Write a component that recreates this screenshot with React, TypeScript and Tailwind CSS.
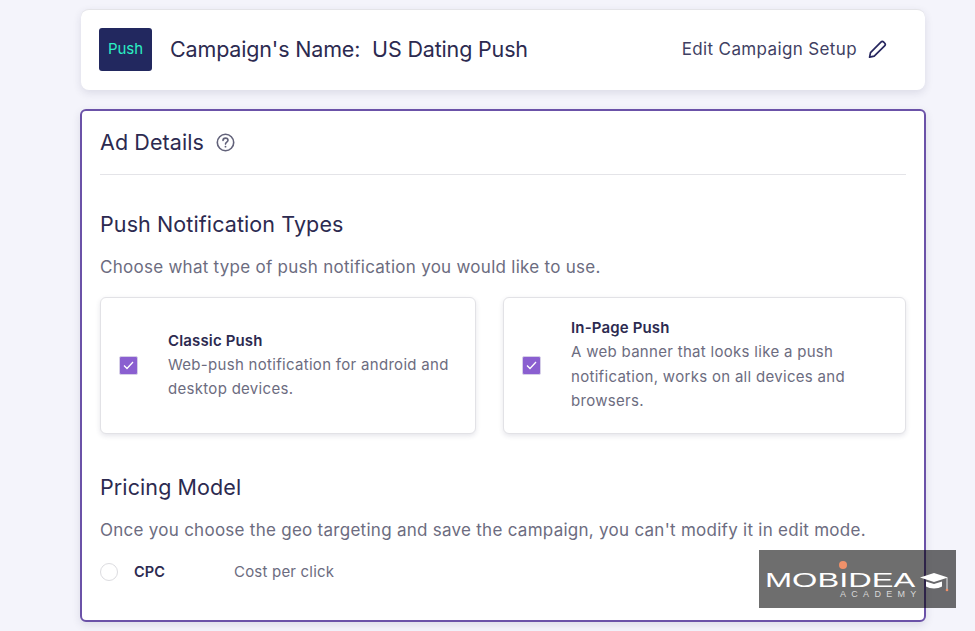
const sans = "font-['Inter','Noto_Sans',sans-serif]";

function HelpIcon() {
  return (
    <svg width="19" height="19" viewBox="0 0 19 19" fill="none" stroke="#62627a" strokeWidth="1.6" strokeLinecap="round">
      <circle cx="9.5" cy="9.5" r="8.2" />
      <path d="M7 7.4c0-1.4 1.1-2.3 2.5-2.3s2.5.9 2.5 2.2c0 1.900-2.5 1.900-2.500 3.800" />
      <path d="M9.5 13.6v.1" strokeWidth="1.8" />
    </svg>
  );
}

function PencilIcon() {
  return (
    <svg width="19" height="19" viewBox="0 0 19 19" fill="none" stroke="#27275f" strokeWidth="1.7" strokeLinejoin="round">
      <path d="M1.6 17.2l.9-4.6L12.9 2.1c.8-.8 2-.8 2.8 0l.9.9c.8.8.8 2 0 2.8L6.200 16.200z" />
    </svg>
  );
}

function CheckBox() {
  return (
    <div className="flex h-[19px] w-[19px] shrink-0 items-center justify-center rounded-[2px] border border-[#d6cfe8] bg-[#8a5fd0]">
      <svg width="11" height="9" viewBox="0 0 11 9" fill="none" stroke="#fff" strokeWidth="1.3">
        <path d="M1 4.500l3 3 6-6.500" />
      </svg>
    </div>
  );
}

function TypeCard({ title, lines, className }: { title: string; lines: string[]; className: string }) {
  return (
    <div className={`flex h-[137px] items-center rounded-[6px] border border-[#e2e2e6] bg-white pl-[18px] shadow-[0_2px_5px_rgba(40,40,80,0.12)] ${className}`}>
      <CheckBox />
      <div className="mb-[2px] ml-[30px]">
        <div className="text-[15px] leading-[25px] font-semibold tracking-[0.15px] text-[#2c2a50]">{title}</div>
        {lines.map((line) => (
          <div key={line} className="text-[15px] leading-[24.5px] tracking-[0.3px] text-[#6c6c80]">{line}</div>
        ))}
      </div>
    </div>
  );
}

function AcademyBadge() {
  return (
    <div className="absolute top-[550px] left-[759px] h-[58px] w-[197px] bg-black/[0.57]">
      <div className="absolute top-[11px] left-[80px] h-[8px] w-[8px] rounded-full bg-[#f0916a]" />
      <div className="absolute top-[18px] left-[6px] origin-left scale-x-[1.55] font-['Liberation_Sans',sans-serif] text-[21px] leading-[24px] text-white">
        MOBIDEA
      </div>
      <div className="absolute top-[41px] left-[81px] font-['Liberation_Sans',sans-serif] text-[9px] leading-[7px] tracking-[5.3px] text-[#d8d8d8]">
        ACADEMY
      </div>
      <svg className="absolute top-[23px] left-[161px]" width="29" height="20" viewBox="0 0 29 20" fill="none">
        <path d="M0 4.500L14 0l14 4.500-14 4.500z" fill="#fff" />
        <path d="M6 8.500l8 2.500 8-2.500v5c-4 2.500-12 2.500-16 0z" fill="#fff" />
        <path d="M27 5v11" stroke="#e8e8e8" strokeWidth="1" />
        <circle cx="27" cy="17" r="1.300" fill="#f0916a" />
      </svg>
    </div>
  );
}

export default function App() {
  return (
    <div className={`relative h-[631px] w-[975px] overflow-hidden bg-[#f4f4fb] pt-[9px] pl-[80px] ${sans}`}>
      <div className="ml-px flex h-[81px] w-[844px] items-center rounded-[8px] border-t border-[#e4e4e8] bg-white pr-[38px] pb-[1px] pl-[18px] shadow-[0_3px_8px_rgba(40,40,80,0.12)]">
        <div className="flex h-[43px] w-[53px] items-center justify-center rounded-[3px] bg-[#22285f] text-[15px] text-[#2bf0c4]">
          Push
        </div>
        <div className="ml-[18px] text-[21.500px] tracking-[-0.16px] text-[#2c2a50]">
          Campaign's Name:&nbsp; US Dating Push
        </div>
        <div className="ml-auto flex items-center gap-[11px] text-[17px] tracking-[0.37px] text-[#3f3f63]">
          Edit Campaign Setup
          <PencilIcon />
        </div>
      </div>

      <div className="mt-[19px] h-[513px] w-[846px] rounded-[6px] border-2 border-[#6b52a8] bg-white px-[18px] shadow-[0_3px_8px_rgba(40,40,80,0.12)]">
        <div className="flex h-[64px] items-center gap-[12px] border-b border-[#e4e4e8] pb-[1px]">
          <span className="text-[21.500px] tracking-[0.1px] text-[#2c2a50]">Ad Details</span>
          <HelpIcon />
        </div>

        <h2 className="mt-[34px] text-[21.500px] leading-[30px] tracking-[0.1px] text-[#2c2a50]">Push Notification Types</h2>
        <p className="mt-[16px] text-[17px] leading-[24px] tracking-[0.27px] text-[#6c6c80]">
          Choose what type of push notification you would like to use.
        </p>

        <div className="mt-[18px] flex gap-[27px]">
          <TypeCard
            className="w-[376px]"
            title="Classic Push"
            lines={["Web-push notification for android and", "desktop devices."]}
          />
          <TypeCard
            className="w-[403px]"
            title="In-Page Push"
            lines={["A web banner that looks like a push", "notification, works on all devices and", "browsers."]}
          />
        </div>

        <h2 className="mt-[38px] text-[21.500px] leading-[30px] tracking-[0.1px] text-[#2c2a50]">Pricing Model</h2>
        <p className="mt-[16px] text-[17px] leading-[24px] tracking-[0.27px] text-[#6c6c80]">
          Once you choose the geo targeting and save the campaign, you can't modify it in edit mode.
        </p>

        <div className="mt-[19px] flex items-center">
          <div className="h-[18px] w-[18px] rounded-full border border-[#dcdce0] bg-white" />
          <span className="ml-[16px] w-[100px] text-[14.500px] font-semibold tracking-[0.1px] text-[#2c2a50]">CPC</span>
          <span className="text-[15px] tracking-[0.2px] text-[#6c6c80]">Cost per click</span>
        </div>
      </div>

      <AcademyBadge />
    </div>
  );
}
